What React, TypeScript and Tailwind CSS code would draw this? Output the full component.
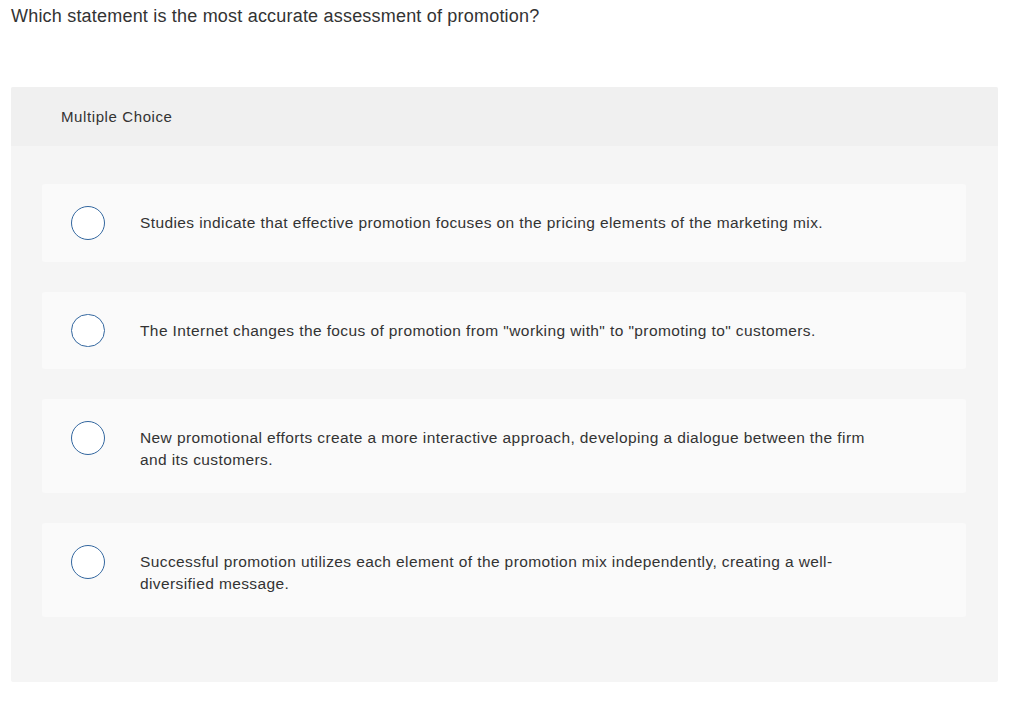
const OPTIONS = [
  "Studies indicate that effective promotion focuses on the pricing elements of the marketing mix.",
  'The Internet changes the focus of promotion from "working with" to "promoting to" customers.',
  "New promotional efforts create a more interactive approach, developing a dialogue between the firm and its customers.",
  "Successful promotion utilizes each element of the promotion mix independently, creating a well-diversified message.",
];

export default function App() {
  return (
    <div className="min-h-[706px] bg-white text-[#333] font-['Liberation_Sans',Arial,sans-serif]">
      <h1 className="px-[11px] pt-[5px] text-[18px] leading-[22px] font-normal tracking-[0.2px]">
        Which statement is the most accurate assessment of promotion?
      </h1>

      <div className="mx-[11px] mt-[60px] w-[987px] rounded-[2px] bg-[#f5f5f5]">
        {/* Header */}
        <div className="flex h-[59px] items-center rounded-t-[2px] bg-[#f0f0f0] pl-[50px] pt-[2px] text-[15px] tracking-[0.6px] text-[#333]">
          Multiple Choice
        </div>

        {/* Choices */}
        <div className="flex flex-col gap-[30px] pl-[31px] pr-[32px] pt-[38px] pb-[65px]">
          {OPTIONS.map((opt) => (
            <div
              key={opt}
              className="flex items-start rounded-[3px] bg-[#fafafa] py-[22px] pl-[29px]"
            >
              <span className="h-[33.5px] w-[34px] flex-shrink-0 rounded-full border-[1.5px] border-[#33679f] bg-white" />
              <p className="ml-[35px] mt-[6px] w-[745px] text-[15.5px] leading-[22px] tracking-[0.4px] text-[#333]">
                {opt}
              </p>
            </div>
          ))}
        </div>
      </div>
    </div>
  );
}
